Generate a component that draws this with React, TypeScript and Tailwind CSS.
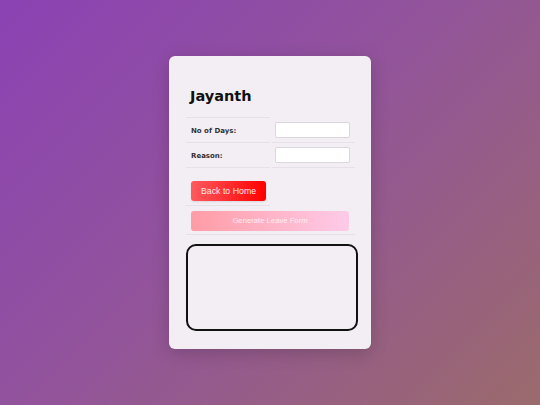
import React from "react";

export default function App() {
  return (
    <div className="min-h-screen w-full flex items-center justify-center bg-[linear-gradient(135deg,#8b42b4_0%,#92539c_45%,#9b6a6c_100%)]">
      <div className="w-[202px] rounded-[6px] bg-[#f3eef4] pt-[32px] pb-[18px] pl-[17px] pr-[16px] shadow-[0_4px_18px_rgba(0,0,0,0.18)]">
        <div className="grid grid-cols-[84px_83px] gap-[2px]">
          <div className="h-[30px] border-b border-[#e6e0e8] pl-[4px]">
            <div className="text-[14.5px] leading-[17px] font-bold text-[#111] [font-family:'DejaVu_Sans',sans-serif]">
              Jayanth
            </div>
          </div>
          <div />
          <div className="h-[23px] border-b border-[#e6e0e8] pl-[5px] flex items-center">
            <span className="text-[7px] font-bold text-[#333] [font-family:'DejaVu_Sans',sans-serif]">
              No of Days:
            </span>
          </div>
          <div className="h-[23px] border-b border-[#e6e0e8] pl-[3px] pt-[2px]">
            <input className="block w-[75px] h-[16px] bg-white border border-[#dcd6de] rounded-[2px] outline-none" />
          </div>
          <div className="h-[23px] border-b border-[#e6e0e8] pl-[5px] flex items-center">
            <span className="text-[7px] font-bold text-[#333] [font-family:'DejaVu_Sans',sans-serif]">
              Reason:
            </span>
          </div>
          <div className="h-[23px] border-b border-[#e6e0e8] pl-[3px] pt-[2px]">
            <input className="block w-[75px] h-[16px] bg-white border border-[#dcd6de] rounded-[2px] outline-none" />
          </div>
          <div className="h-[36px] border-b border-[#e6e0e8] pl-[5px] pt-[11px]">
            <button className="w-[75px] h-[20px] rounded-[3px] bg-[linear-gradient(90deg,#ff5a5e,#ff0000)] text-[8.8px] leading-none text-[#ffe6e6] [font-family:'Liberation_Sans',sans-serif] flex items-center justify-center shadow-[0_1px_2px_rgba(0,0,0,0.1)]">
              Back to Home
            </button>
          </div>
          <div />
          <div className="col-span-2 h-[27px] border-b border-[#e6e0e8] pl-[5px] pt-[3px]">
            <button className="w-[158px] h-[20px] rounded-[3px] bg-[linear-gradient(90deg,#ff9ca5,#ffcbe9)] text-[7.7px] leading-none text-[#ffeef2] [font-family:'Liberation_Sans',sans-serif] flex items-center justify-center">
              Generate Leave Form
            </button>
          </div>
        </div>
        <div className="mt-[9px] w-[172px] h-[87px] border-2 border-[#111] rounded-[10px]" />
      </div>
    </div>
  );
}
